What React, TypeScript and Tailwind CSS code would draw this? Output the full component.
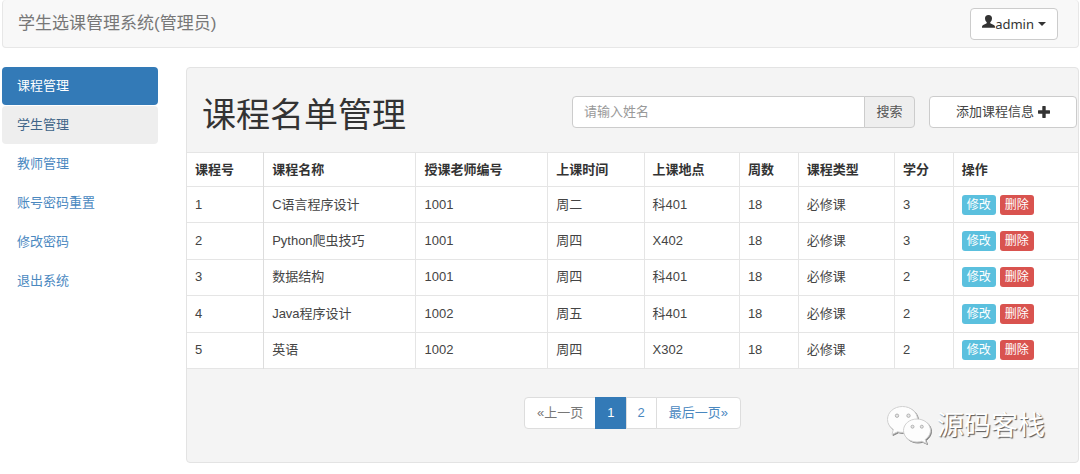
import React from 'react';

const navItems = ['课程管理', '学生管理', '教师管理', '账号密码重置', '修改密码', '退出系统'];

const navStyles = [
  'bg-[#337ab7] text-white',
  'bg-[#eeeeee] text-[#3f6488]',
];

const columns = [
  { title: '课程号', width: 'w-[8.6%]' },
  { title: '课程名称', width: 'w-[17.1%]' },
  { title: '授课老师编号', width: 'w-[14.8%]' },
  { title: '上课时间', width: 'w-[10.8%]' },
  { title: '上课地点', width: 'w-[10.7%]' },
  { title: '周数', width: 'w-[6.6%]' },
  { title: '课程类型', width: 'w-[10.8%]' },
  { title: '学分', width: 'w-[6.6%]' },
  { title: '操作', width: '' },
];

const courses = [
  ['1', 'C语言程序设计', '1001', '周二', '科401', '18', '必修课', '3'],
  ['2', 'Python爬虫技巧', '1001', '周四', 'X402', '18', '必修课', '3'],
  ['3', '数据结构', '1001', '周四', '科401', '18', '必修课', '2'],
  ['4', 'Java程序设计', '1002', '周五', '科401', '18', '必修课', '2'],
  ['5', '英语', '1002', '周四', 'X302', '18', '必修课', '2'],
];

function UserIcon() {
  return (
    <svg viewBox="0 0 13 13" className="mb-1 h-[13px] w-[13px]" fill="currentColor" aria-hidden="true">
      <path d="M6.500 0C4.200 0 3 1.300 3 3.300c0 1.500.6 2.900 1.500 3.800.5.600.4 1.200-.2 1.500L1.200 10.100C.4 10.500 0 11 0 11.800v.9h13v-.9c0-.8-.4-1.300-1.200-1.700L8.700 8.600c-.6-.3-.7-.9-.2-1.500.9-.9 1.500-2.300 1.500-3.800C10 1.300 8.800 0 6.500 0z" />
    </svg>
  );
}

function PlusIcon() {
  return (
    <svg viewBox="0 0 12 12" className="h-3 w-3" fill="currentColor" aria-hidden="true">
      <path d="M4.800 0h2.400c.3 0 .5.200.5.500v3.800h3.800c.3 0 .5.200.5.500v2.400c0 .3-.2.500-.5.500H7.700v3.800c0 .3-.2.500-.5.500H4.800c-.3 0-.5-.2-.5-.5V7.700H.5c-.3 0-.5-.2-.5-.5V4.800c0-.3.2-.5.500-.5h3.800V.5c0-.3.2-.5.500-.5z" />
    </svg>
  );
}

function ChatIcon() {
  return (
    <svg viewBox="0 0 46 40" className="h-10 w-[46px]" aria-hidden="true">
      <g strokeWidth="1" strokeLinejoin="round" fill="#fdfdfd" stroke="#d0d0d0">
        <g className="[filter:drop-shadow(1px_1px_0.5px_#888888)]">
          <path d="M16.500.5C8 .5 1.500 6.200 1.500 13.400c0 4.200 2.100 7.600 5.800 10L6 28.500l5.600-2.700c1.600.4 3.200.6 4.900.6 8.300 0 15-5.800 15-13S24.800.5 16.500.5z" />
        </g>
        <g className="[filter:drop-shadow(1px_1px_0.5px_#888888)]">
          <path d="M31 13c-7.500 0-13.500 5.100-13.500 11.500S23.500 36 31 36c1.700 0 3.300-.3 4.800-.7l4.700 2.200-1.300-4c3.100-2.200 5.300-5.400 5.300-9C44.500 18.100 38.500 13 31 13z" />
        </g>
      </g>
      <g fill="#e6e6e6" stroke="#a5a5a5" strokeWidth="0.8">
        <circle cx="11" cy="9.700" r="1.700" />
        <circle cx="22.500" cy="9.700" r="1.700" />
        <circle cx="26.500" cy="20.700" r="1.500" />
        <circle cx="35.800" cy="20.700" r="1.500" />
      </g>
    </svg>
  );
}

function Watermark() {
  return (
    <div className="pointer-events-none absolute right-[33px] bottom-4 flex items-center gap-[5px]">
      <ChatIcon />
      <span className="text-[27px] leading-10 text-white [text-shadow:1px_1px_1px_#555555]">源码客栈</span>
    </div>
  );
}

export default function App() {
  return (
    <div className="pr-px pl-0.5 font-['Liberation_Sans','Noto_Sans_CJK_SC',sans-serif] text-[13px] leading-[18px] text-[#444444]">
      <header className="flex h-12 items-center justify-between rounded border-x border-b border-[#e7e7e7] bg-[#f8f8f8] pr-5 pl-[15px]">
        <a href="#" className="text-[17px] leading-6 text-[#777777]">学生选课管理系统(管理员)</a>
        <button
          type="button"
          className="flex h-8 items-center rounded border border-[#cccccc] bg-white px-[11px] font-['Noto_Sans','Noto_Sans_CJK_SC',sans-serif] text-[13px] text-[#333333]"
        >
          <UserIcon />
          <span>admin</span>
          <svg viewBox="0 0 8 4" className="ml-1 h-1 w-2" fill="currentColor" aria-hidden="true">
            <path d="M0 0h8L4 4z" />
          </svg>
        </button>
      </header>

      <div className="mt-[19px] flex gap-7">
        <nav className="flex w-[156px] shrink-0 flex-col gap-px">
          {navItems.map((item, i) => (
            <a
              key={item}
              href="#"
              className={`flex h-[38px] items-center rounded px-[15px] ${navStyles[i] ?? 'text-[#4a88bf]'}`}
            >
              {item}
            </a>
          ))}
        </nav>

        <main className="relative min-w-0 flex-1 rounded border border-[#e3e3e3] bg-[#f4f4f4]">
          <div className="flex items-center gap-[14px] pt-[25px] pr-px pb-[21px] pl-[15px]">
            <h1 className="flex-1 pt-1.5 text-[34px] leading-8 whitespace-nowrap text-[#333333]">课程名单管理</h1>
            <form className="flex h-8" onSubmit={(e) => e.preventDefault()}>
              <input
                type="text"
                aria-label="姓名"
                placeholder="请输入姓名"
                className="w-[293px] rounded-l border border-[#cccccc] bg-white px-[11px] placeholder:text-[#999999]"
              />
              <button
                type="submit"
                className="-ml-px w-[51px] rounded-r border border-[#cccccc] bg-[#eeeeee] text-[#555555]"
              >
                搜索
              </button>
            </form>
            <button
              type="button"
              className="flex h-8 w-[148px] items-center justify-center gap-1 rounded border border-[#cccccc] bg-white"
            >
              添加课程信息
              <span className="text-[#333333]"><PlusIcon /></span>
            </button>
          </div>

          <table className="h-[217px] w-full table-fixed border-collapse border-y border-[#e5e5e5] bg-white text-left">
            <thead>
              <tr>
                {columns.map((c) => (
                  <th
                    key={c.title}
                    className={`h-[34px] border-r border-[#e5e5e5] px-2 font-bold text-[#333333] first:border-r-[#dddddd] last:border-r-0 ${c.width}`}
                  >
                    {c.title}
                  </th>
                ))}
              </tr>
            </thead>
            <tbody>
              {courses.map((row) => (
                <tr key={row[0]} className="border-t border-[#e5e5e5]">
                  {row.map((cell, i) => (
                    <td key={i} className="border-r border-[#e5e5e5] px-2 first:border-r-[#dddddd]">
                      {cell}
                    </td>
                  ))}
                  <td className="px-2">
                    <div className="flex gap-1 text-[12px] leading-5 text-white">
                      <button type="button" className="rounded-[3px] bg-[#5bc0de] px-[5px]">修改</button>
                      <button type="button" className="rounded-[3px] bg-[#d9534f] px-[5px]">删除</button>
                    </div>
                  </td>
                </tr>
              ))}
            </tbody>
          </table>

          <nav aria-label="分页" className="flex justify-center pt-7 pb-[33px] text-[#4a88bf]">
            <a href="#" className="rounded-l border border-[#dddddd] bg-white px-3 py-1.5 text-[#777777]">«上一页</a>
            <a href="#" className="-ml-px border border-[#337ab7] bg-[#337ab7] px-[11px] py-1.5 text-white">1</a>
            <a href="#" className="-ml-px border border-[#dddddd] bg-white px-[11px] py-1.5">2</a>
            <a href="#" className="-ml-px rounded-r border border-[#dddddd] bg-white px-3 py-1.5">最后一页»</a>
          </nav>

          <Watermark />
        </main>
      </div>
    </div>
  );
}
